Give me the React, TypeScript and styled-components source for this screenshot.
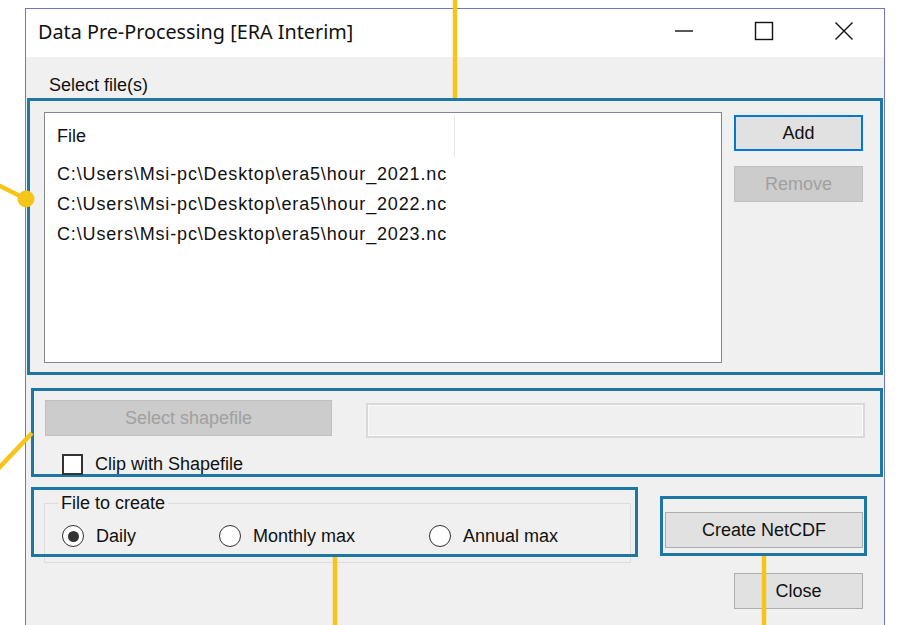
import React from 'react';
import styled, { createGlobalStyle } from 'styled-components';

const UI_FONT = `'Liberation Sans', Arial, sans-serif`;
const TITLE_FONT = `'Noto Sans', 'Open Sans', sans-serif`;
const MARK = '#1c77a5';
const PIN = '#f6c51a';

const files = [
  'C:\\Users\\Msi-pc\\Desktop\\era5\\hour_2021.nc',
  'C:\\Users\\Msi-pc\\Desktop\\era5\\hour_2022.nc',
  'C:\\Users\\Msi-pc\\Desktop\\era5\\hour_2023.nc',
];

const outputs = [
  { label: 'Daily', checked: true },
  { label: 'Monthly max', checked: false },
  { label: 'Annual max', checked: false },
];

export default function App() {
  return (
    <Stage>
      <GlobalStyle />
      <Window>
        <TitleBar>
          <Title>Data Pre-Processing [ERA Interim]</Title>
          <Controls>
            <ControlButton>
              <svg width="20" height="20" viewBox="0 0 20 20">
                <line x1="1" y1="10" x2="19" y2="10" stroke="#111" strokeWidth="1.4" />
              </svg>
            </ControlButton>
            <ControlButton>
              <svg width="20" height="20" viewBox="0 0 20 20">
                <rect x="1.5" y="1.5" width="17" height="17" fill="none" stroke="#111" strokeWidth="1.4" />
              </svg>
            </ControlButton>
            <ControlButton>
              <svg width="20" height="20" viewBox="0 0 20 20">
                <path d="M1.5 1.5 L18.5 18.5 M18.5 1.5 L1.5 18.5" stroke="#111" strokeWidth="1.4" />
              </svg>
            </ControlButton>
          </Controls>
        </TitleBar>

        <Client>
          <SectionLabel>Select file(s)</SectionLabel>

          <FilesBox>
            <ListView>
              <ListHeader>
                <HeaderCell>File</HeaderCell>
              </ListHeader>
              {files.map((f) => (
                <ListRow key={f}>{f}</ListRow>
              ))}
            </ListView>
            <ButtonColumn>
              <Button $focused>Add</Button>
              <Button disabled>Remove</Button>
            </ButtonColumn>
          </FilesBox>

          <ShapeBox>
            <ShapeRow>
              <Button disabled $width={287}>
                Select shapefile
              </Button>
              <PathField />
            </ShapeRow>
            <CheckRow>
              <CheckBox />
              <Caption>Clip with Shapefile</Caption>
            </CheckRow>
          </ShapeBox>

          <BottomRow>
            <GroupBox>
              <Legend>File to create</Legend>
              <RadioRow>
                {outputs.map((o) => (
                  <RadioItem key={o.label}>
                    <RadioDot $checked={o.checked} />
                    <Caption>{o.label}</Caption>
                  </RadioItem>
                ))}
              </RadioRow>
            </GroupBox>
            <ActionColumn>
              <Button $width={198}>Create NetCDF</Button>
              <Button>Close</Button>
            </ActionColumn>
            <Outline $left={5} $top={10} $width={607} $height={70} />
            <Outline $left={634} $top={19} $width={207} $height={60} />
          </BottomRow>
        </Client>
      </Window>

      <Pins width="900" height="625" viewBox="0 0 900 625">
        <line x1="455" y1="0" x2="455" y2="98" stroke={PIN} strokeWidth="4.5" />
        <line x1="-2" y1="185" x2="26" y2="199" stroke={PIN} strokeWidth="4.5" />
        <circle cx="26" cy="199" r="8.5" fill={PIN} />
        <line x1="-2" y1="469" x2="32" y2="433" stroke={PIN} strokeWidth="4.5" />
        <line x1="335" y1="557" x2="335" y2="625" stroke={PIN} strokeWidth="4.5" />
        <line x1="764" y1="556" x2="764" y2="625" stroke={PIN} strokeWidth="4.5" />
      </Pins>
    </Stage>
  );
}

const GlobalStyle = createGlobalStyle`
  html, body {
    margin: 0;
    padding: 0;
    background: #ffffff;
  }
  * {
    box-sizing: border-box;
  }
`;

const Stage = styled.div`
  position: relative;
  width: 900px;
  height: 625px;
  overflow: hidden;
  background: #ffffff;
  padding: 8px 0 0 25px;
`;

const Window = styled.div`
  width: 860px;
  height: 640px;
  border: 1px solid #7373c4;
  border-bottom: none;
  display: flex;
  flex-direction: column;
`;

const TitleBar = styled.div`
  height: 48px;
  flex: none;
  display: flex;
  align-items: center;
  background: #ffffff;
  padding-left: 12px;
`;

const Title = styled.div`
  flex: 1;
  font-family: ${TITLE_FONT};
  font-size: 19.8px;
  color: #111;
  padding-bottom: 4px;
`;

const Controls = styled.div`
  display: flex;
  height: 100%;
`;

const ControlButton = styled.div`
  width: 80px;
  display: flex;
  align-items: center;
  justify-content: center;
  padding-bottom: 4px;
`;

const Client = styled.div`
  flex: 1;
  background: #f0f0f0;
  font-family: ${UI_FONT};
  font-size: 18px;
  color: #111;
`;

const SectionLabel = styled.div`
  padding: 18px 0 0 23px;
  height: 41px;
  line-height: 21px;
`;

const FilesBox = styled.div`
  margin-left: 1px;
  width: 856px;
  height: 277px;
  border: 3px solid ${MARK};
  display: flex;
  padding: 11px 0 0 14px;
`;

const ListView = styled.div`
  width: 678px;
  height: 251px;
  background: #ffffff;
  border: 1px solid #828790;
`;

const ListHeader = styled.div`
  height: 46px;
  display: flex;
  padding-top: 2px;
`;

const HeaderCell = styled.div`
  width: 410px;
  height: 42px;
  line-height: 42px;
  padding-left: 12px;
  border-right: 1px solid #e5e5e5;
`;

const ListRow = styled.div`
  height: 30px;
  line-height: 30px;
  padding-left: 12px;
  letter-spacing: 0.85px;
  white-space: nowrap;
`;

const ButtonColumn = styled.div`
  margin-left: 12px;
  padding-top: 3px;
  display: flex;
  flex-direction: column;
  gap: 15px;
`;

const Button = styled.button<{ $focused?: boolean; $width?: number }>`
  width: ${(p) => p.$width ?? 129}px;
  height: 36px;
  font-family: ${UI_FONT};
  font-size: 18px;
  color: #111;
  background: #e1e1e1;
  border: 1px solid #adadad;
  border-radius: 0;
  padding: 0;
  ${(p) => p.$focused && `border: 2px solid #0078d7;`}

  &:disabled {
    background: #cccccc;
    border-color: #bfbfbf;
    color: #a0a0a0;
  }
`;

const ShapeBox = styled.div`
  margin: 13px 0 0 5px;
  width: 852px;
  height: 89px;
  border: 3px solid ${MARK};
  padding: 9px 0 0 11px;
  display: flex;
  flex-direction: column;
`;

const ShapeRow = styled.div`
  display: flex;
  align-items: flex-start;
  gap: 34px;
`;

const PathField = styled.div`
  margin-top: 3px;
  width: 499px;
  height: 35px;
  background: #f0f0f0;
  border: 2px solid #d9d9d9;
  box-shadow: inset 0 0 0 1px #fbfbfb;
`;

const CheckRow = styled.div`
  margin: 16px 0 0 17px;
  display: flex;
  align-items: center;
  gap: 12px;
`;

const CheckBox = styled.div`
  width: 21px;
  height: 21px;
  background: #ffffff;
  border: 2px solid #333;
`;

const Caption = styled.span`
  line-height: 21px;
`;

const BottomRow = styled.div`
  position: relative;
  display: flex;
  justify-content: space-between;
  padding: 16px 21px 0 18px;
`;

const GroupBox = styled.fieldset`
  margin: 0;
  min-width: 0;
  width: 587px;
  height: 70px;
  border: 1px solid #dcdcdc;
  padding: 0 0 0 13px;
`;

const Legend = styled.legend`
  padding: 0 3px;
  line-height: 21px;
  font-size: 18px;
`;

const RadioRow = styled.div`
  display: grid;
  grid-template-columns: 157px 210px auto;
  margin: 11px 0 0 4px;
`;

const RadioItem = styled.div`
  display: flex;
  align-items: center;
  gap: 12px;
`;

const RadioDot = styled.span<{ $checked: boolean }>`
  width: 22px;
  height: 22px;
  border-radius: 50%;
  border: 1.6px solid #333;
  background: #ffffff;
  display: flex;
  align-items: center;
  justify-content: center;

  &::after {
    content: '';
    width: 11px;
    height: 11px;
    border-radius: 50%;
    background: ${(p) => (p.$checked ? '#333' : 'transparent')};
  }
`;

const ActionColumn = styled.div`
  padding-top: 19px;
  display: flex;
  flex-direction: column;
  align-items: flex-end;
  gap: 25px;
`;

// highlight frames drawn over the dialog controls
const Outline = styled.div<{ $left: number; $top: number; $width: number; $height: number }>`
  position: absolute;
  left: ${(p) => p.$left}px;
  top: ${(p) => p.$top}px;
  width: ${(p) => p.$width}px;
  height: ${(p) => p.$height}px;
  border: 3px solid ${MARK};
  pointer-events: none;
`;

const Pins = styled.svg`
  position: absolute;
  left: 0;
  top: 0;
  pointer-events: none;
`;
